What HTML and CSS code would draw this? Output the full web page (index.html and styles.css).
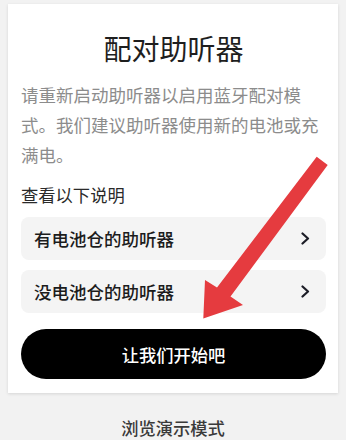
FILE: index.html
```html
<!DOCTYPE html>
<html lang="zh-CN">
<head>
<meta charset="utf-8">
<link rel="stylesheet" href="styles.css">
</head>
<body>
<div class="page">
  <div class="card">
    <h1 class="title">配对助听器</h1>
    <p class="desc">请重新启动助听器以启用蓝牙配对模式。我们建议助听器使用新的电池或充满电。</p>
    <div class="label">查看以下说明</div>
    <div class="list">
      <div class="item">
        <span class="item-text">有电池仓的助听器</span>
        <svg class="chev" width="9" height="13" viewBox="0 0 9 13"><path d="M1.5 1.5 L7 6.5 L1.5 11.5" fill="none" stroke="#1b1c26" stroke-width="2.2" stroke-linecap="round" stroke-linejoin="round"/></svg>
      </div>
      <div class="item">
        <span class="item-text">没电池仓的助听器</span>
        <svg class="chev" width="9" height="13" viewBox="0 0 9 13"><path d="M1.5 1.5 L7 6.5 L1.5 11.5" fill="none" stroke="#1b1c26" stroke-width="2.2" stroke-linecap="round" stroke-linejoin="round"/></svg>
      </div>
    </div>
    <div class="btn">让我们开始吧</div>
  </div>
  <div class="demo">浏览演示模式</div>
</div>
<svg class="arrow" width="346" height="440" viewBox="0 0 346 440">
  <polygon points="316.7,156.7 327.7,165 230.5,296.5 243,305 203.3,318.5 205,280 217,287.5" fill="#e53b3f"/>
</svg>
</body>
</html>
```
FILE: styles.css
```css
html, body {
  margin: 0;
  padding: 0;
  background: #f2f2f2;
}
body {
  font-family: "Noto Sans CJK SC", "Noto Sans", sans-serif;
  width: 346px;
  height: 440px;
  overflow: hidden;
}
.page {
  padding: 4px 8px 0 8px;
  display: flex;
  flex-direction: column;
}
.card {
  background: #ffffff;
  box-shadow: 0 1px 3px rgba(0,0,0,0.12);
  padding: 24px 12px 14px 13px;
  display: flex;
  flex-direction: column;
}
.title {
  margin: 0;
  font-size: 28px;
  line-height: 40px;
  font-weight: 400;
  color: #1e1e1e;
  text-align: center;
}
.desc {
  margin: 12px 0 0 0;
  font-size: 17.5px;
  line-height: 30px;
  color: #8c8c8c;
}
.label {
  margin-top: 13px;
  font-size: 17.3px;
  line-height: 24px;
  color: #2a2a2a;
}
.list {
  margin-top: 10px;
  display: flex;
  flex-direction: column;
  gap: 10px;
}
.item {
  height: 43px;
  background: #f4f4f4;
  border-radius: 8px;
  display: flex;
  align-items: center;
  justify-content: space-between;
  padding: 0 16px 0 13px;
}
.item-text {
  font-size: 17.5px;
  font-weight: 500;
  color: #1c1c1c;
}
.chev {
  display: block;
}
.btn {
  margin-top: 16px;
  height: 50px;
  border-radius: 25px;
  background: #000000;
  color: #ffffff;
  font-size: 17.3px;
  font-weight: 500;
  display: flex;
  align-items: center;
  justify-content: center;
}
.demo {
  margin-top: 22px;
  text-align: center;
  font-size: 17.3px;
  line-height: 26px;
  font-weight: 500;
  color: #3a3a3a;
}
.arrow {
  position: absolute;
  left: 0;
  top: 0;
  pointer-events: none;
}
```
